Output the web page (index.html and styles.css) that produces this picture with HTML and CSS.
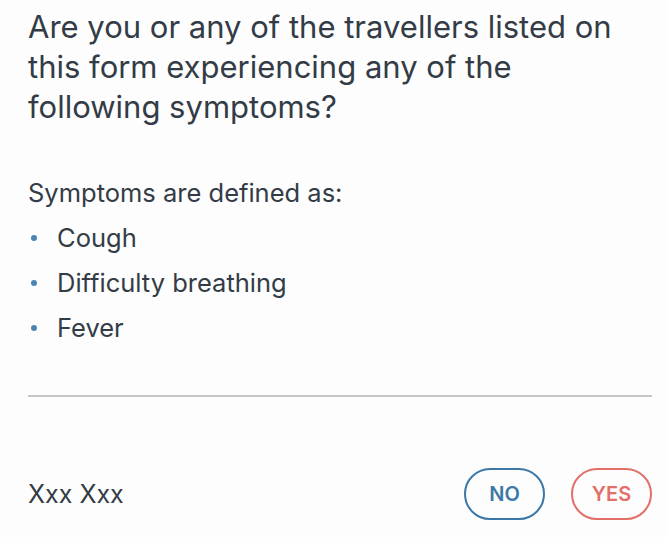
FILE: index.html
```html
<!DOCTYPE html>
<html>
  <head>
    <meta charset="utf-8">
    <title>Symptoms</title>
    <link rel="stylesheet" href="styles.css">
  </head>
  <body>
    <div id="card">
      <h1 class="question">Are you or any of the travellers listed on this form experiencing any of the following symptoms?</h1>
      <p class="lead">Symptoms are defined as:</p>
      <ul class="symptoms">
        <li>Cough</li>
        <li>Difficulty breathing</li>
        <li>Fever</li>
      </ul>
      <hr class="divider">
      <div class="traveller">
        <span class="name">Xxx Xxx</span>
        <div class="answers">
          <button class="answer no">NO</button>
          <button class="answer yes">YES</button>
        </div>
      </div>
    </div>
  </body>
</html>
```

FILE: styles.css
```css
body {
  margin: 0;
  background: #fdfdfd;
  color: #333c46;
  font-family: Inter, sans-serif;
}

#card {
  padding: 7px 16px 0 28px;
}

.question {
  font-weight: 400;
  font-size: 31px;
  line-height: 40px;
  margin: 0 0 51px 0;
  max-width: 610px;
}

.lead {
  font-size: 25.5px;
  line-height: 30px;
  margin: 0 0 15px 0;
}

.symptoms {
  font-size: 25.5px;
  line-height: 30px;
  list-style: none;
  margin: 0;
  padding: 0;
}

.symptoms li {
  display: flex;
  align-items: center;
  margin-bottom: 15px;
}

.symptoms li:last-child {
  margin-bottom: 0;
}

.symptoms li::before {
  content: "";
  width: 6px;
  height: 6px;
  border-radius: 50%;
  background: #4a86b4;
  margin: 0 20px 0 3px;
}

.divider {
  border: none;
  border-top: 2px solid #c6c6c6;
  margin: 52px 0 0 0;
}

.traveller {
  display: flex;
  align-items: center;
  justify-content: space-between;
  margin-top: 71px;
}

.name {
  font-size: 25px;
}

.answers {
  display: flex;
  gap: 26px;
}

.answer {
  width: 81px;
  height: 52px;
  border-radius: 26px;
  background: transparent;
  font-family: Inter, sans-serif;
  font-size: 20px;
  font-weight: 600;
  border: 2px solid;
  padding: 0;
}

.no {
  color: #3b78a8;
  border-color: #3b78a8;
}

.yes {
  color: #e36f69;
  border-color: #e36f69;
}
```
